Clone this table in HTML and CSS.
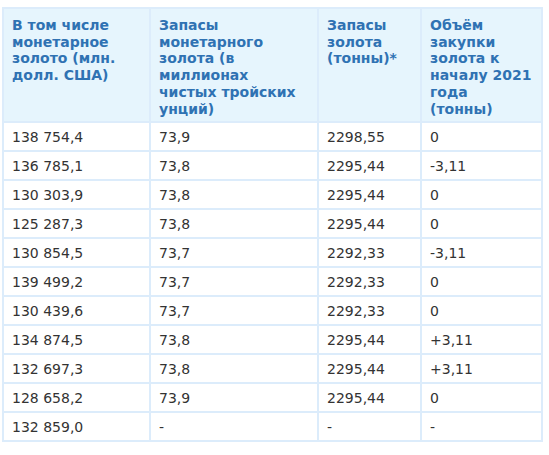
FILE: index.html
```html
<!DOCTYPE html>
<html lang="ru">
<head>
<meta charset="utf-8">
<link rel="stylesheet" href="styles.css">
</head>
<body>
<table class="gold">
<colgroup>
<col class="c1"><col class="c2"><col class="c3"><col class="c4">
</colgroup>
<thead>
<tr>
<th>В том числе монетарное золото (млн. долл. США)</th>
<th>Запасы монетарного золота (в миллионах чистых тройских унций)</th>
<th>Запасы золота (тонны)*</th>
<th>Объём закупки золота к началу 2021 года (тонны)</th>
</tr>
</thead>
<tbody>
<tr><td>138 754,4</td><td>73,9</td><td>2298,55</td><td>0</td></tr>
<tr><td>136 785,1</td><td>73,8</td><td>2295,44</td><td>-3,11</td></tr>
<tr><td>130 303,9</td><td>73,8</td><td>2295,44</td><td>0</td></tr>
<tr><td>125 287,3</td><td>73,8</td><td>2295,44</td><td>0</td></tr>
<tr><td>130 854,5</td><td>73,7</td><td>2292,33</td><td>-3,11</td></tr>
<tr><td>139 499,2</td><td>73,7</td><td>2292,33</td><td>0</td></tr>
<tr><td>130 439,6</td><td>73,7</td><td>2292,33</td><td>0</td></tr>
<tr><td>134 874,5</td><td>73,8</td><td>2295,44</td><td>+3,11</td></tr>
<tr><td>132 697,3</td><td>73,8</td><td>2295,44</td><td>+3,11</td></tr>
<tr><td>128 658,2</td><td>73,9</td><td>2295,44</td><td>0</td></tr>
<tr><td>132 859,0</td><td>-</td><td>-</td><td>-</td></tr>
</tbody>
</table>
</body>
</html>
```
FILE: styles.css
```css
html, body {
  margin: 0;
  padding: 0;
  background: #ffffff;
}
body {
  padding: 7px 0 0 2px;
  font-family: "DejaVu Sans", Verdana, sans-serif;
}
.gold {
  border-collapse: collapse;
  width: 539px;
  table-layout: fixed;
  border: 2px solid #dcecfb;
}
.c1 { width: 147px; }
.c2 { width: 168px; }
.c3 { width: 103px; }
.c4 { width: 121px; }
.gold th, .gold td {
  border: 2px solid #dcecfb;
  text-align: left;
  vertical-align: top;
}
.gold th {
  background: #e6f5fd;
  color: #2f72b3;
  font-size: 14px;
  font-weight: bold;
  line-height: 16.7px;
  padding: 8px 8px 4px 8px;
}
.gold td {
  color: #333333;
  font-size: 14px;
  line-height: 17px;
  padding: 6px 8px 4px 8px;
}
```
